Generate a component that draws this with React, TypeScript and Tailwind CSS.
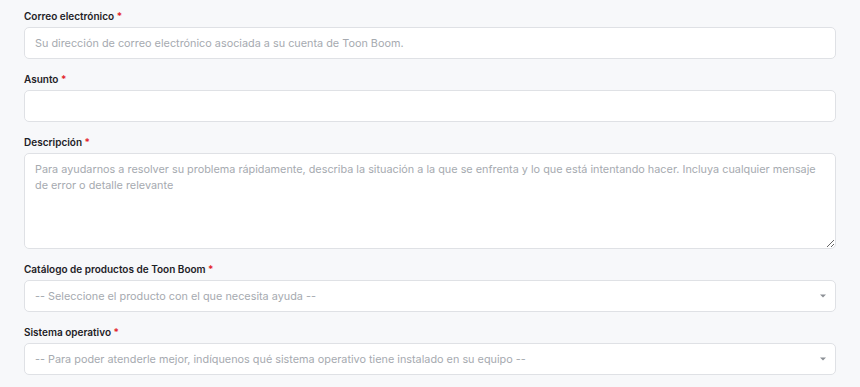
const Label = ({ text }: { text: string }) => (
  <label className="block h-4 mb-[3px] text-[10px] leading-4 font-semibold text-[#1d2126]">
    {text} <span className="text-[#e3242b]">*</span>
  </label>
);

const inputCls =
  "block w-full h-8 px-[10px] rounded-[5px] border border-[#dfe1e5] bg-white text-[10.85px] text-[#2a2e33] placeholder:text-[#a6aab0] outline-none";

const SelectBox = ({ placeholder }: { placeholder: string }) => (
  <div className="relative w-full h-8 px-[10px] rounded-[5px] border border-[#dfe1e5] bg-white flex items-center">
    <span className="text-[10.85px] text-[#a6aab0] truncate">{placeholder}</span>
    <svg
      className="absolute right-[9px] top-1/2 -translate-y-1/2"
      width="6"
      height="4"
      viewBox="0 0 6 4"
    >
      <path d="M0 0.5H6L3 3.5Z" fill="#8c9096" />
    </svg>
  </div>
);

export default function App() {
  return (
    <div
      className="min-h-[387px] w-full bg-[#f7f8fa] px-6 pt-[8px]"
      style={{ fontFamily: "Inter, 'Liberation Sans', sans-serif" }}
    >
      <div className="flex flex-col gap-3">
        <div>
          <Label text="Correo electrónico" />
          <input
            className={inputCls}
            placeholder="Su dirección de correo electrónico asociada a su cuenta de Toon Boom."
          />
        </div>
        <div>
          <Label text="Asunto" />
          <input className={inputCls} />
        </div>
        <div>
          <Label text="Descripción" />
          <textarea
            className="block w-full h-24 px-[10px] py-[7px] rounded-[5px] border border-[#dfe1e5] bg-white text-[10.85px] leading-4 text-[#2a2e33] placeholder:text-[#a6aab0] outline-none resize-y"
            placeholder="Para ayudarnos a resolver su problema rápidamente, describa la situación a la que se enfrenta y lo que está intentando hacer. Incluya cualquier mensaje de error o detalle relevante"
          />
        </div>
        <div>
          <Label text="Catálogo de productos de Toon Boom" />
          <SelectBox placeholder="-- Seleccione el producto con el que necesita ayuda --" />
        </div>
        <div>
          <Label text="Sistema operativo" />
          <SelectBox placeholder="-- Para poder atenderle mejor, indíquenos qué sistema operativo tiene instalado en su equipo --" />
        </div>
      </div>
    </div>
  );
}
